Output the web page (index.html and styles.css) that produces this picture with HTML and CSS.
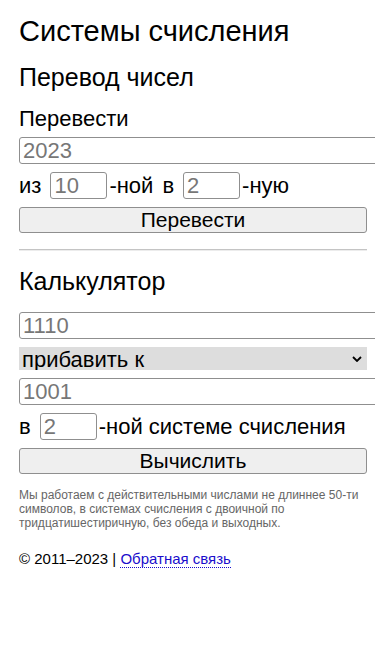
FILE: index.html
```html
<!DOCTYPE html>
<html lang="ru">
<head>
    <meta charset="UTF-8">
    <meta name="viewport" content="width=device-width, initial-scale=1.0">
    <title>Системы счисления</title>
    <link rel="stylesheet" href="styles.css">
</head>
<body>
<div class="page">

    <h1>Системы счисления</h1>

    <!-- Перевод -->
    <h2>Перевод чисел</h2>
    <label class="label" for="number">Перевести</label>
    <input type="text" id="number" class="field" value="2023">
    <div class="row">
        <span>из</span>
        <input type="text" class="small" value="10">
        <span>-ной</span>
        <span class="word">в</span>
        <input type="text" class="small" value="2">
        <span>-ную</span>
    </div>
    <button class="btn">Перевести</button>

    <hr class="divider">

    <!-- Калькулятор -->
    <h2>Калькулятор</h2>
    <input type="text" class="field" value="1110">
    <select class="op">
        <option>прибавить к</option>
        <option>вычесть</option>
        <option>умножить на</option>
        <option>разделить на</option>
    </select>
    <input type="text" class="field" value="1001">
    <div class="row">
        <span>в</span>
        <input type="text" class="small" value="2">
        <span>-ной системе счисления</span>
    </div>
    <button class="btn">Вычислить</button>

    <p class="note">Мы работаем с действительными числами не длиннее 50-ти символов, в системах счисления с двоичной по тридцатишестиричную, без обеда и выходных.</p>

    <p class="footer">&copy; 2011&ndash;2023 | <a href="#">Обратная связь</a></p>

</div>
</body>
</html>
```

FILE: styles.css
```css
body {
    margin: 0;
    font-family: "Liberation Sans", Arial, sans-serif;
    color: #000;
    overflow: hidden;
}
.page {
    padding: 15px 8px 20px 19px;
}
h1 {
    font-size: 29px;
    font-weight: normal;
    line-height: 32px;
    margin: 0 0 17px;
}
h2 {
    font-size: 25px;
    font-weight: normal;
    line-height: 26px;
    margin: 0 0 18px;
}
.label {
    display: block;
    font-size: 22px;
    line-height: 22px;
    margin-bottom: 7px;
}
input[type="text"] {
    font-family: inherit;
    font-size: 22px;
    color: #777;
    border: 1px solid #8f8f8f;
    border-radius: 3px;
    padding: 0 3px;
    height: 27px;
    box-sizing: border-box;
}
.field {
    display: block;
    width: calc(100% + 40px);
    margin-bottom: 8px;
}
.row {
    display: flex;
    align-items: center;
    font-size: 22px;
    height: 27px;
    margin-bottom: 8px;
}
.small {
    width: 57px;
    margin: 0 2px 0 9px;
}
.word {
    margin-left: 9px;
}
.btn {
    display: block;
    width: 100%;
    height: 26px;
    font-family: inherit;
    font-size: 21px;
    color: #000;
    background-color: #efefef;
    border: 1px solid #8f8f8f;
    border-radius: 3px;
    padding: 0;
}
.divider {
    border: 0;
    border-top: 1px solid #c4c4c4;
    border-bottom: 1px solid #ececec;
    margin: 16px 0 17px;
}
.op {
    display: block;
    width: 100%;
    height: 23px;
    margin-bottom: 8px;
    font-family: inherit;
    font-size: 22px;
    color: #000;
    border: none;
    border-radius: 0;
    padding: 0 3px;
    background-color: #dddddd;
    -webkit-appearance: none;
    appearance: none;
    background-image: url("data:image/svg+xml,%3Csvg xmlns='http://www.w3.org/2000/svg' width='10' height='6' viewBox='0 0 10 6'%3E%3Cpath d='M1 1l4 4 4-4' fill='none' stroke='%23000' stroke-width='1.8'/%3E%3C/svg%3E");
    background-repeat: no-repeat;
    background-position: right 5px center;
}
.note {
    font-size: 12px;
    line-height: 14px;
    color: #666;
    margin: 14px 0 20px;
}
.footer {
    font-size: 15px;
    line-height: 18px;
    margin: 0;
}
.footer a {
    color: #1a0dcc;
    text-decoration: none;
    border-bottom: 1px dotted #1a0dcc;
}
```
